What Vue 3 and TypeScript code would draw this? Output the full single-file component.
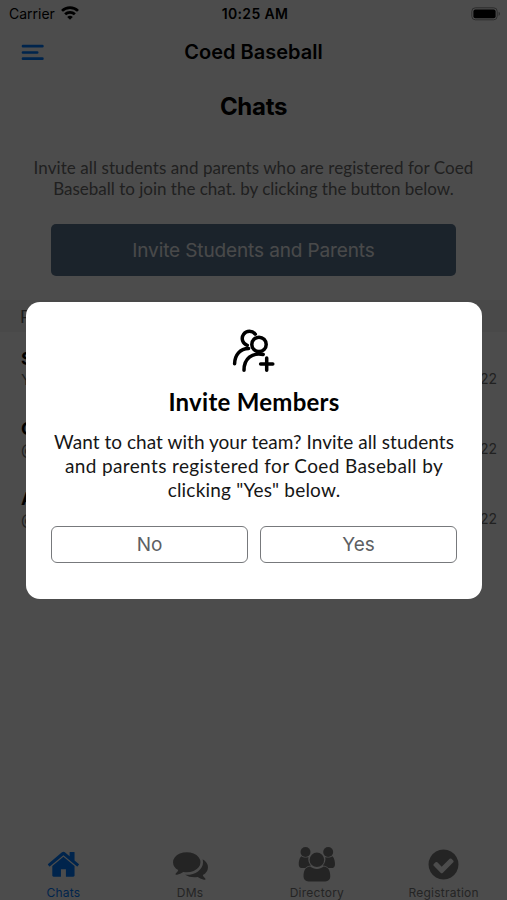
<script setup lang="ts">
interface ChatRow {
  name: string
  preview: string
  date: string
}

const rows: ChatRow[] = [
  { name: 'S', preview: 'Y', date: '22' },
  { name: 'C', preview: '@', date: '22' },
  { name: 'A', preview: '@', date: '22' },
]
</script>

<template>
  <div class="screen">
    <header class="status">
      <div class="carrier">
        <span class="carrier-name">Carrier</span>
        <svg width="18" height="14" viewBox="0 0 18 14" fill="none" stroke="#000" stroke-width="2.7">
          <path d="M1 4.9a11.4 11.4 0 0 1 16 0" />
          <path d="M4.1 8.3a7 7 0 0 1 9.8 0" />
          <path d="M9 13.8 6.2 11a4 4 0 0 1 5.6 0z" fill="#000" stroke="none" />
        </svg>
      </div>
      <span class="time">10:25 AM</span>
      <svg class="battery" width="30" height="14" viewBox="0 0 30 14">
        <rect x=".8" y=".8" width="25.4" height="12" rx="3.5" fill="none" stroke="#909090" />
        <rect x="2.4" y="2.4" width="22.2" height="8.8" rx="2" fill="#000" />
        <path d="M27.6 4.7a2.3 2.3 0 0 1 0 4.2z" fill="#909090" />
      </svg>
    </header>

    <nav class="navbar">
      <svg class="menu" width="23" height="17" viewBox="0 0 23 17" stroke="#007aff" stroke-width="2.7" stroke-linecap="round">
        <path d="M2 2.2h19.4M2 8.500h14.200M2 14.700h19.400" />
      </svg>
      <span class="nav-title">Coed Baseball</span>
    </nav>

    <h1 class="heading">Chats</h1>
    <p class="intro">
      <span class="intro-a">Invite all students and parents who are registered for Coed</span><br />
      <span class="intro-b">Baseball to join the chat. by clicking the button below.</span>
    </p>
    <button class="invite"><span>Invite Students and Parents</span></button>

    <div class="section">P</div>
    <ul class="list">
      <li v-for="row in rows" :key="row.name" class="row">
        <div class="row-text">
          <strong>{{ row.name }}</strong>
          <span>{{ row.preview }}</span>
        </div>
        <span class="date">{{ row.date }}</span>
      </li>
    </ul>

    <footer class="tabs">
      <div class="tab active">
        <svg width="34" height="36" viewBox="-70 -50 1760 1864" fill="currentColor">
          <path d="M1408 992v480q0 26-19 45t-45 19h-384v-384h-256v384h-384q-26 0-45-19t-19-45v-480q0-1 .5-3t.5-3l575-474 575 474q1 2 1 6zm223-69l-62 74q-8 9-21 11h-3q-13 0-21-7l-692-577-692 577q-12 8-24 7-13-2-21-11l-62-74q-8-10-7-23.5t11-21.5l719-599q32-26 76-26t76 26l244 204v-195q0-14 9-23t23-9h192q14 0 23 9t9 23v408l219 182q10 8 11 21.5t-7 23.5z" />
        </svg>
        <span>Chats</span>
      </div>
      <div class="tab">
        <svg width="35" height="36" viewBox="0 -40 1792 1792" fill="currentColor">
          <path d="M1408 768q0 139-94 257t-256.5 186.5-353.5 68.5q-86 0-176-16-124 88-278 128-36 9-86 16h-3q-11 0-20.5-8t-11.5-21q-1-3-1-6.5t.5-6.5 2-6l2.5-5 3.5-5.5 4-5 4.5-5 4-4.5q5-6 23-25t26-29.5 22.5-29 25-38.5 20.5-44q-124-72-195-177t-71-224q0-139 94-257t256.5-186.5 353.5-68.5 353.5 68.5 256.5 186.5 94 257zm384 256q0 120-71 224.5t-195 176.5q10 24 20.5 44t25 38.5 22.5 29 26 29.5 23 25q1 1 4 4.5t4.5 5 4 5 3.5 5.5l2.5 5 2 6 .5 6.5-1 6.5q-3 14-13 22t-22 7q-50-7-86-16-154-40-278-128-90 16-176 16-271 0-472-132 58 4 88 4 161 0 309-45t264-129q125-92 192-212t67-254q0-77-23-152 129 71 204 178t75 230z" />
        </svg>
        <span>DMs</span>
      </div>
      <div class="tab">
        <svg width="38" height="36" viewBox="0 0 38 36" fill="currentColor">
          <circle cx="7.5" cy="6" r="5" />
          <circle cx="30.2" cy="6" r="5" />
          <circle cx="18.9" cy="13.8" r="7.3" />
          <path d="M3.2 10.2c1.3.9 2.8 1.4 4.3 1.4 1 0 2-.2 2.9-.6-.5 3.6.4 6.4 2.6 8.6-2.3.1-4.2 1-5.6 2.5h-3C2 22.1.7 20.8.7 18.2c0-2.3.4-6 2.5-8z" />
          <path d="M34.5 10.2c-1.3.9-2.8 1.4-4.3 1.4-1 0-2-.2-2.9-.6.5 3.6-.4 6.4-2.6 8.6 2.3.1 4.2 1 5.6 2.5h3c2.4 0 3.7-1.3 3.7-3.9 0-2.3-.4-6-2.5-8z" />
          <path d="M12.2 20.6c2 1.5 4.3 2.3 6.7 2.3s4.7-.8 6.7-2.3c5 .2 6.7 4.7 6.7 10 0 3-2 4.8-4.9 4.800h-17c-2.900 0-4.900-1.800-4.900-4.800 0-5.300 1.700-9.800 6.700-10z" />
        </svg>
        <span>Directory</span>
      </div>
      <div class="tab">
        <svg width="35" height="36" viewBox="0 -30 1792 1792" fill="currentColor">
          <path d="M1412 734q0-28-18-46l-91-90q-19-19-45-19t-45 19l-408 407-226-226q-19-19-45-19t-45 19l-91 90q-18 18-18 46 0 27 18 45l362 362q19 19 45 19 27 0 46-19l543-543q18-18 18-45zm252 162q0 209-103 385.5t-279.5 279.5-385.5 103-385.5-103-279.5-279.5-103-385.5 103-385.5 279.5-279.5 385.5-103 385.5 103 279.5 279.5 103 385.5z" />
        </svg>
        <span>Registration</span>
      </div>
    </footer>

    <div class="overlay">
      <section class="modal" role="dialog">
        <svg class="members" width="44" height="44" viewBox="0 0 44 44" fill="none" stroke="#000" stroke-width="3.5" stroke-linecap="round">
          <path d="M23.3 5.2A7.2 7.2 0 1 0 15.300 16.300" />
          <circle cx="27" cy="15.4" r="7.2" />
          <path d="M2.6 34.8C2.8 25.8 8 19.8 16.6 19.600" />
          <path d="M12 41.200C12 29.700 20 23.200 31.200 25.500" />
          <path d="M34.700 29v12.200M28.600 35.100h12.200" />
        </svg>
        <h2>Invite Members</h2>
        <p class="message">
          <span class="m1">Want to chat with your team? Invite all students</span><br />
          <span class="m2">and parents registered for Coed Baseball by</span><br />
          <span class="m3">clicking "Yes" below.</span>
        </p>
        <div class="actions">
          <button>No</button>
          <button>Yes</button>
        </div>
      </section>
    </div>
  </div>
</template>

<style>
body {
  margin: 0;
}
</style>

<style scoped>
.screen {
  position: relative;
  display: flex;
  flex-direction: column;
  width: 507px;
  height: 900px;
  overflow: hidden;
  background: #fff;
  color: #000;
  font-family: Inter, "Liberation Sans", sans-serif;
}
button {
  font: inherit;
  padding: 0;
}
.status {
  display: grid;
  grid-template-columns: 1fr auto 1fr;
  align-items: center;
  height: 27px;
  padding: 0 6px 0 9px;
  box-sizing: border-box;
  font-size: 14px;
}
.carrier {
  display: flex;
  align-items: center;
  gap: 6px;
}
.carrier svg {
  margin-top: -2px;
}
.time {
  font-weight: 600;
  letter-spacing: 0.35px;
}
.battery {
  justify-self: end;
}
.navbar {
  display: grid;
  grid-template-columns: 1fr auto 1fr;
  align-items: center;
  height: 50px;
  padding: 0 21px;
}
.nav-title {
  font-size: 20px;
  font-weight: 600;
}
.heading {
  margin: 13px 0 0;
  height: 33px;
  line-height: 33px;
  text-align: center;
  font-size: 24px;
  font-weight: 700;
  letter-spacing: -0.3px;
}
.intro {
  margin: 34px 0 0;
  text-align: center;
  font-family: Lato, sans-serif;
  font-size: 17px;
  line-height: 21px;
  white-space: nowrap;
  color: #6d6d6d;
}
.intro-a {
  letter-spacing: 0.08px;
}
.invite {
  flex: none;
  width: 405px;
  height: 52px;
  margin: 25px 0 0 51px;
  border: 0;
  border-radius: 5px;
  background: #5a7690;
  color: #f4f6f8;
  font-size: 19px;
  letter-spacing: -0.12px;
}
.section {
  height: 32px;
  margin-top: 24px;
  padding-left: 20px;
  background: #f4f4f4;
  color: #666;
  font-family: Lato, sans-serif;
  font-size: 17px;
  line-height: 34px;
}
.list {
  margin: 0;
  padding: 0;
  list-style: none;
}
.row {
  display: flex;
  justify-content: space-between;
  height: 70px;
  padding: 0 10px 0 21px;
}
.row-text {
  display: flex;
  flex-direction: column;
  padding-top: 16px;
  font-size: 15px;
  line-height: 21px;
}
.row-text strong {
  font-size: 18px;
}
.row-text span,
.date {
  color: #707070;
}
.date {
  padding-top: 36px;
  font-size: 14px;
  line-height: 21px;
}
.tabs {
  display: grid;
  grid-template-columns: repeat(4, 1fr);
  height: 54px;
  margin-top: auto;
}
.tab {
  display: flex;
  flex-direction: column;
  align-items: center;
  color: #7b7b7b;
  font-size: 12px;
  letter-spacing: 0.25px;
}
.tab svg {
  flex: none;
}
.tab span {
  line-height: 16px;
  margin-top: 3px;
}
.tab.active {
  color: #007aff;
}
.overlay {
  position: absolute;
  inset: 0;
  background: rgba(0, 0, 0, 0.7);
}
.modal {
  display: flex;
  flex-direction: column;
  align-items: center;
  box-sizing: border-box;
  width: 456px;
  height: 297px;
  margin: 302px 0 0 26px;
  padding: 27px 24px 0;
  border-radius: 14px;
  background: #fff;
}
.modal h2 {
  margin: 15px 0 0;
  font-family: Lato, sans-serif;
  font-size: 24px;
  line-height: 28px;
  letter-spacing: 0.26px;
}
.message {
  margin: 14px 0 0;
  text-align: center;
  white-space: nowrap;
  font-family: Lato, sans-serif;
  font-size: 19px;
  line-height: 24px;
  color: #161616;
}
.m1 {
  letter-spacing: 0.04px;
}
.m2 {
  letter-spacing: 0.38px;
}
.m3 {
  letter-spacing: 0.2px;
}
.actions {
  display: grid;
  grid-template-columns: 1fr 1fr;
  gap: 12px;
  width: 406px;
  margin-top: 24px;
}
.actions button {
  height: 37px;
  border: 1.5px solid #77797c;
  border-radius: 6px;
  background: #fff;
  color: #5d5f63;
  font-size: 19px;
}
</style>
